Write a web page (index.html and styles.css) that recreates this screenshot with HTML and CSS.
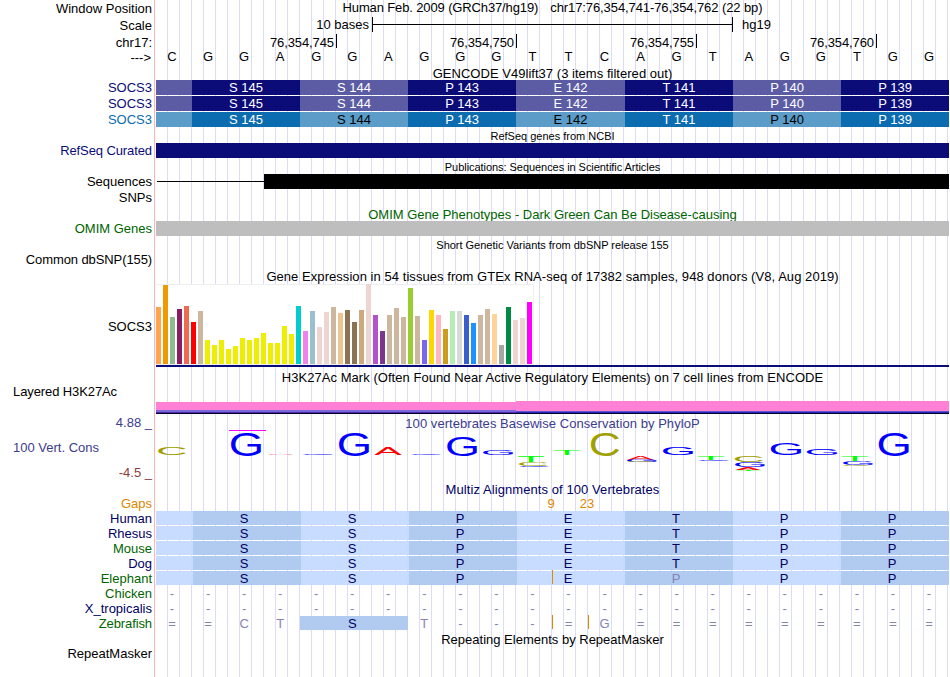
FILE: index.html
```html
<!DOCTYPE html>
<html lang="en">
<head>
    <meta charset="UTF-8">
    <meta name="viewport" content="width=device-width, initial-scale=1.0">
    <title>chr17:76,354,741-76,354,762</title>
    <link rel="stylesheet" href="styles.css">
</head>
<body>
    <div class="browser">
        <div class="row position">
            <div class="label low">Window Position</div>
            <div class="plot"><span class="t-assembly">Human Feb. 2009 (GRCh37/hg19)</span><span class="t-range">chr17:76,354,741-76,354,762 (22 bp)</span></div>
        </div>
        <div class="row scale">
            <div class="label low">Scale</div>
            <div class="plot"><span class="scale-text">10 bases</span><span class="scale-bar"></span><span>hg19</span></div>
        </div>
        <div class="row ruler">
            <div class="label low">chr17:</div>
            <div class="plot"><span class="tick">76,354,745</span><span class="tick">76,354,750</span><span class="tick">76,354,755</span><span class="tick">76,354,760</span></div>
        </div>
        <div class="row sequence">
            <div class="label low arrow">---&gt;</div>
            <div class="plot bases black" data-bases="CGGAGGAGGGTTCAGTAGGTGG"></div>
        </div>

        <div class="row title first"><div class="label"></div><div class="plot"><span class="t-gencode">GENCODE V49lift37 (3 items filtered out)</span></div></div>
        <div class="row gene"><div class="label navy">SOCS3</div><div class="plot codons" data-codons></div></div>
        <div class="row gene"><div class="label navy">SOCS3</div><div class="plot codons" data-codons></div></div>
        <div class="row gene light"><div class="label blue">SOCS3</div><div class="plot codons" data-codons></div></div>

        <div class="row title small short"><div class="label"></div><div class="plot"><span class="t-refseq">RefSeq genes from NCBI</span></div></div>
        <div class="row bar-row"><div class="label navy narrow">RefSeq Curated</div><div class="plot"><div class="bar refseq"></div></div></div>

        <div class="row title small"><div class="label"></div><div class="plot"><span class="t-pubs">Publications: Sequences in Scientific Articles</span></div></div>
        <div class="row pubs"><div class="label">Sequences</div><div class="plot"><div class="intron"></div><div class="bar match"></div></div></div>
        <div class="row bar-row"><div class="label">SNPs</div><div class="plot"></div></div>

        <div class="row title"><div class="label"></div><div class="plot green"><span class="t-omim">OMIM Gene Phenotypes - Dark Green Can Be Disease-causing</span></div></div>
        <div class="row bar-row"><div class="label green">OMIM Genes</div><div class="plot"><div class="bar omim"></div></div></div>

        <div class="row title small"><div class="label"></div><div class="plot"><span class="t-dbsnp">Short Genetic Variants from dbSNP release 155</span></div></div>
        <div class="row bar-row"><div class="label narrow">Common dbSNP(155)</div><div class="plot"></div></div>

        <div class="row title gtex-title"><div class="label"></div><div class="plot"><span class="t-gtex">Gene Expression in 54 tissues from GTEx RNA-seq of 17382 samples, 948 donors (V8, Aug 2019)</span></div></div>
        <div class="row gtex">
            <div class="label">SOCS3</div>
            <div class="plot">
                <div class="chart" id="gtexChart"></div>
                <div class="gene-line"></div>
            </div>
        </div>

        <div class="row title"><div class="label"></div><div class="plot"><span class="t-h3k">H3K27Ac Mark (Often Found Near Active Regulatory Elements) on 7 cell lines from ENCODE</span></div></div>
        <div class="row h3k">
            <div class="label left narrow">Layered H3K27Ac</div>
            <div class="plot"><div class="signal low-signal"></div><div class="signal high-signal"></div></div>
        </div>

        <div class="row cons">
            <div class="label">
                <div class="limit upper">4.88 _</div>
                <div class="cons-name">100 Vert. Cons</div>
                <div class="limit lower">-4.5 _</div>
            </div>
            <div class="plot">
                <div class="cons-title"><span class="t-phylop">100 vertebrates Basewise Conservation by PhyloP</span></div>
                <svg class="logo" id="logo" width="793" height="51" viewBox="156 429 793 51"></svg>
            </div>
        </div>

        <div class="row title multiz-title"><div class="label"></div><div class="plot dark"><span class="t-multiz">Multiz Alignments of 100 Vertebrates</span></div></div>
        <div class="row species"><div class="label orange">Gaps</div><div class="plot gap-counts"><span>9</span><span>23</span></div></div>
        <div class="row species"><div class="label dark">Human</div><div class="plot aminos" data-aminos="SSPETPP"></div></div>
        <div class="row species"><div class="label dark">Rhesus</div><div class="plot aminos" data-aminos="SSPETPP"></div></div>
        <div class="row species"><div class="label green">Mouse</div><div class="plot aminos" data-aminos="SSPETPP"></div></div>
        <div class="row species"><div class="label dark">Dog</div><div class="plot aminos" data-aminos="SSPETPP"></div></div>
        <div class="row species"><div class="label green">Elephant</div><div class="plot aminos" data-aminos="SSPEpPP"><i class="insert insert-9"></i></div></div>
        <div class="row species"><div class="label green">Chicken</div><div class="plot bases" data-bases="----------------------"></div></div>
        <div class="row species"><div class="label dark">X_tropicalis</div><div class="plot bases" data-bases="----------------------"></div></div>
        <div class="row species"><div class="label green narrow">Zebrafish</div><div class="plot bases" data-bases="==CTsT---=G========="><i class="insert insert-9"></i><i class="insert insert-23"></i></div></div>

        <div class="row title last"><div class="label"></div><div class="plot"><span class="t-repeat">Repeating Elements by RepeatMasker</span></div></div>
        <div class="row rest"><div class="label">RepeatMasker</div><div class="plot"></div></div>
    </div>

    <script>
        const codons = ['', 'S 145', 'S 144', 'P 143', 'E 142', 'T 141', 'P 140', 'P 139'];

        function addCell(parent, text, className) {
            const cell = document.createElement('span');
            cell.textContent = text;
            if (className) cell.className = className;
            parent.appendChild(cell);
        }

        document.querySelectorAll('[data-codons]').forEach(el => {
            codons.forEach(c => addCell(el, c));
        });

        // lower case = substituted amino acid, drawn faded
        document.querySelectorAll('[data-aminos]').forEach(el => {
            addCell(el, '');
            for (const a of el.dataset.aminos) {
                addCell(el, a.toUpperCase(), a === a.toUpperCase() ? '' : 'faded');
            }
        });

        // lower case = a whole codon, three bases wide
        document.querySelectorAll('[data-bases]').forEach(el => {
            for (const b of el.dataset.bases) {
                addCell(el, b.toUpperCase(), /[a-z]/.test(b) ? 'codon' : '');
            }
        });

        // [height, colour] per tissue
        const tissues = [
            [57, '#ffa54f'], [79, '#ee9a00'], [47, '#8fbc8f'], [55, '#8b1c62'], [58, '#ee6a50'], [42, '#ff0000'],
            [53, '#cdb79e'], [24, '#eeee00'], [19, '#eeee00'], [24, '#eeee00'], [15, '#eeee00'], [18, '#eeee00'],
            [26, '#eeee00'], [24, '#eeee00'], [26, '#eeee00'], [31, '#eeee00'], [21, '#eeee00'], [21, '#eeee00'],
            [38, '#eeee00'], [30, '#eeee00'], [58, '#00cdcd'], [33, '#ee82ee'], [53, '#9ac0cd'], [37, '#eed5d2'],
            [52, '#eed5d2'], [57, '#cdb79e'], [51, '#eec591'], [54, '#8b7355'], [42, '#8b7355'], [54, '#cdaa7d'],
            [80, '#eed5d2'], [49, '#b452cd'], [33, '#7a378b'], [49, '#cdb79e'], [56, '#cdb79e'], [47, '#cdb79e'],
            [76, '#9acd32'], [48, '#cdb79e'], [24, '#7a67ee'], [54, '#ffd700'], [49, '#ffb6c1'], [35, '#cd9b1d'],
            [53, '#b4eeb4'], [53, '#d9d9d9'], [49, '#3a5fcd'], [41, '#1e90ff'], [49, '#cdb79e'], [55, '#cdb79e'],
            [50, '#ffd39b'], [19, '#a6a6a6'], [57, '#008b45'], [44, '#eed5d2'], [46, '#eed5d2'], [62, '#ff00ff']
        ];
        const chart = document.getElementById('gtexChart');
        tissues.forEach(([height, color]) => {
            const bar = document.createElement('div');
            bar.className = 'tissue';
            bar.style.height = height + 'px';
            bar.style.background = color;
            chart.appendChild(bar);
        });

        // glyph extents at font-size 100: left, right, bottom, top
        const extents = {
            A: [0.2, 66.5, 0, 68.8],
            C: [5, 68.3, -1, 69.8],
            G: [5, 71.6, -1, 69.8],
            T: [2.2, 59, 0, 68.8]
        };
        // letter, left, right, top, bottom
        const letters = [
            ['C', 158.3, 186, 447, 455], ['G', 231, 261.3, 432, 456], ['A', 267.3, 293.5, 454, 455],
            ['G', 303.3, 333, 453.6, 455], ['G', 339, 369.3, 432, 456], ['A', 374.3, 401.7, 448, 455],
            ['G', 411.7, 441, 454.2, 455], ['G', 447.3, 477.3, 436, 456], ['G', 483, 513.3, 450, 455],
            ['T', 518, 544, 456, 462], ['C', 519, 547.5, 462, 466], ['G', 520, 548.7, 466, 467],
            ['T', 554, 580, 450, 455], ['C', 591, 619, 433, 456],
            ['A', 627, 654, 456, 460], ['G', 627, 657, 460, 462], ['C', 627, 655, 461.4, 462.4],
            ['G', 663, 693.3, 447, 455], ['T', 697.7, 724, 456, 460], ['G', 699, 729, 460, 461.2],
            ['C', 735, 763, 456, 462], ['G', 735, 765, 462, 467], ['A', 735.3, 760.7, 467, 470], ['T', 736, 761, 470, 471],
            ['G', 770.7, 801.3, 443, 455.3], ['G', 806.7, 837.3, 449, 455.3],
            ['T', 842, 868, 456, 461], ['G', 843, 873, 461, 465], ['C', 843, 870, 465, 466],
            ['G', 878.7, 909, 433, 456]
        ];
        const NS = 'http://www.w3.org/2000/svg';
        const logo = document.getElementById('logo');
        letters.forEach(([ch, x0, x1, y0, y1]) => {
            const [l, r, b, t] = extents[ch];
            const sx = (x1 - x0) / (r - l);
            const sy = (y1 - y0) / (t - b);
            const text = document.createElementNS(NS, 'text');
            text.setAttribute('class', 'base-' + ch.toLowerCase());
            text.setAttribute('transform', `matrix(${sx} 0 0 ${sy} ${x0 - l * sx} ${y1 + b * sy})`);
            text.textContent = ch;
            logo.appendChild(text);
        });
        const clip = document.createElementNS(NS, 'rect');
        clip.setAttribute('class', 'clipped');
        clip.setAttribute('x', 229);
        clip.setAttribute('y', 430);
        clip.setAttribute('width', 37);
        clip.setAttribute('height', 1);
        logo.appendChild(clip);
    </script>
</body>
</html>
```

FILE: styles.css
```css
body {
    margin: 0;
    background: #fff;
    font-family: "Liberation Sans", Arial, sans-serif;
    font-size: 13px;
    line-height: 15px;
    color: #000;
    overflow: hidden;
}
.browser {
    display: flex;
    flex-direction: column;
    width: 949px;
    height: 677px;
    background: linear-gradient(to right, #dcdcf8 1px, transparent 1px) 167px 0 / 12px 100%;
}
.row {
    display: flex;
    flex: none;
    height: 15px;
    white-space: nowrap;
}
.label {
    flex: none;
    box-sizing: border-box;
    width: 155px;
    padding-right: 2px;
    border-right: 1px solid #ffb4b4;
    background: #fff;
    text-align: right;
}
.label.low {
    padding-top: 1px;
}
.label.arrow {
    padding-right: 3px;
}
.narrow {
    letter-spacing: -0.1px;
}
.plot {
    position: relative;
    flex: none;
    width: 793px;
    border-left: 1px solid #fff;
}

/* text colours */
.navy { color: #0c0c78; }
.blue { color: #0c6cb0; }
.green { color: #006400; }
.dark { color: #000064; }
.orange { color: #e08600; }

/* header rows */
.position {
    height: 17px;
}
.position .plot {
    display: flex;
    justify-content: center;
    gap: 12px;
}
.scale {
    height: 17px;
}
.scale .plot {
    display: flex;
}
.scale-text {
    width: 213px;
    text-align: right;
}
.scale-bar {
    box-sizing: border-box;
    width: 361px;
    height: 15px;
    margin: 0 9px 0 3px;
    border: solid #000;
    border-width: 0 1px;
    background: linear-gradient(#000, #000) 0 7px / 100% 1px no-repeat;
}
.ruler .plot {
    display: flex;
}
.tick {
    box-sizing: border-box;
    width: 180px;
    height: 14px;
    padding: 1px 2px 0 0;
    border-right: 1px solid #000;
    text-align: right;
    letter-spacing: -0.1px;
}
.tick:first-child {
    width: 181px;
}
.sequence {
    height: 16px;
}

/* track titles */
.title {
    height: 16px;
}
.title .plot {
    box-sizing: border-box;
    width: 794px;
    padding-top: 2px;
    text-align: center;
}
.title.first,
.title.last,
.title.short {
    height: 15px;
}
.title.first .plot,
.title.last .plot,
.title.short .plot {
    padding-top: 1px;
}
.small {
    font-size: 11px;
}
.gtex-title {
    height: 17px;
}
.t-assembly { letter-spacing: -0.13px; }
.t-range { letter-spacing: -0.09px; }
.t-gencode { letter-spacing: 0.03px; }
.t-pubs { letter-spacing: -0.05px; }
.t-dbsnp { letter-spacing: -0.02px; }
.t-gtex { letter-spacing: 0.055px; }
.t-h3k { letter-spacing: 0.045px; }
.t-phylop { letter-spacing: 0.05px; }
.t-multiz { letter-spacing: 0.08px; }

/* genes */
.gene {
    height: 16px;
}
.codons {
    display: grid;
    grid-template-columns: 36px 108px 108px 108px 109px 108px 108px 108px;
    height: 15px;
    color: #fff;
    text-align: center;
}
.codons span {
    background: #0c0c78;
}
.codons span:nth-child(odd) {
    background: #5c5ca4;
}
.light .codons span {
    background: #0c6cb0;
}
.light .codons span:nth-child(odd) {
    background: #5c9cc8;
    color: #000;
}

/* bars */
.bar {
    height: 15px;
}
.refseq {
    background: #0c0c78;
}
.omim {
    background: #bebebe;
}
.pubs {
    height: 16px;
}
.pubs .plot {
    display: flex;
}
.intron {
    width: 107px;
    height: 1px;
    margin: 7px 0 0 1px;
    background: #000;
}
.match {
    flex: 1;
    background: #000;
}

/* GTEx */
.gtex {
    height: 84px;
}
.gtex .label {
    padding-top: 35px;
}
.chart {
    display: flex;
    align-items: flex-end;
    gap: 2px;
    box-sizing: border-box;
    width: 378px;
    height: 81px;
    background: #fff;
    border: solid #eee;
    border-width: 1px 1px 1px 0;
}
.tissue {
    flex: none;
    width: 5px;
}
.gene-line {
    height: 2px;
    background: #0c0c78;
}

/* H3K27Ac */
.h3k {
    height: 30px;
}
.label.left {
    padding-left: 13px;
    text-align: left;
}
.h3k .plot {
    display: flex;
    align-items: flex-end;
}
.low-signal {
    width: 360px;
    height: 12px;
    background: linear-gradient(#ff80d4 8px, #7868d8 8px, #7868d8 10px, #5028b0 10px, #5028b0 11px, #000028 11px);
}
.high-signal {
    flex: 1;
    height: 13px;
    background: linear-gradient(#ff80d4 10px, #6050d0 10px, #6050d0 11px, #2828b8 11px, #2828b8 12px, #000028 12px);
}

/* conservation */
.cons {
    height: 66px;
}
.cons .label {
    padding-top: 1px;
}
.limit {
    color: #3c3c8c;
}
.limit.lower {
    margin-top: 10px;
    color: #8c3c3c;
}
.cons-name {
    margin-top: 10px;
    padding-left: 13px;
    color: #3c3c8c;
    text-align: left;
}
.cons-title {
    padding-top: 2px;
    height: 13px;
    color: #3c3c8c;
    text-align: center;
}
.logo {
    display: block;
    overflow: visible;
    font-size: 100px;
}
.base-a { fill: #f00; }
.base-c { fill: #a0a000; }
.base-g { fill: #00f; }
.base-t { fill: #0f0; }
.clipped { fill: #f0f; }

/* alignments */
.bases {
    display: grid;
    grid-template-columns: repeat(22, 1fr);
    color: #8484b4;
    text-align: center;
}
.bases.black {
    color: #000;
}
.bases span {
    padding-right: 4px;
}
.bases .codon {
    grid-column: span 3;
    height: 14px;
    background: #b0caf0;
    color: #000064;
}
.aminos {
    display: grid;
    grid-template-columns: 37px repeat(7, 108px);
    grid-template-rows: 14px;
    height: 14px;
    color: #000064;
    text-align: center;
}
.aminos span {
    padding-right: 6px;
    background: #b0caf0;
}
.aminos span:nth-of-type(odd) {
    background: #c8dcff;
}
.aminos .faded {
    color: #8484b4;
}
.gap-counts {
    display: flex;
    box-sizing: border-box;
    padding-left: 377px;
    color: #e08600;
}
.gap-counts span {
    width: 36px;
    text-align: center;
}
.insert {
    position: absolute;
    top: -1px;
    width: 1px;
    height: 14px;
    background: #e08600;
}
.insert-9 {
    left: 396px;
}
.insert-23 {
    left: 432px;
}
.rest {
    flex: 1;
}
```
